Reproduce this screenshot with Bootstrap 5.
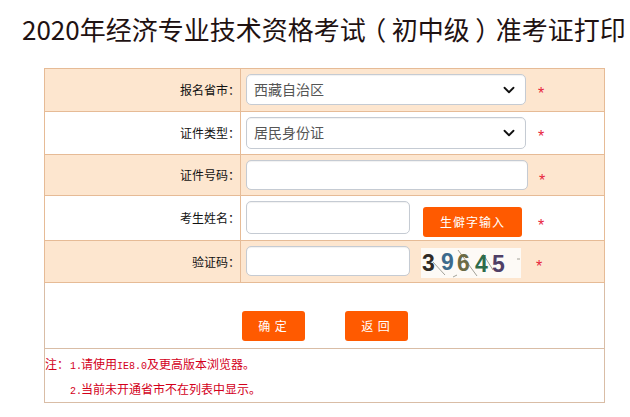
<!-- index.html -->
<!DOCTYPE html>
<html lang="zh-CN">
<head>
  <meta charset="UTF-8">
  <meta name="viewport" content="width=device-width, initial-scale=1">
  <link href="https://cdn.jsdelivr.net/npm/bootstrap@5.3.2/dist/css/bootstrap.min.css" rel="stylesheet">
  <script src="https://cdn.jsdelivr.net/npm/bootstrap@5.3.2/dist/js/bootstrap.bundle.min.js"></script>
  <style>
    body { font-family: "Noto Sans CJK SC", "Liberation Sans", sans-serif; background: #fff; overflow: hidden; }
    .page-title { font-family: "Noto Sans CJK SC", sans-serif; font-size: 26px; line-height: 38px; font-weight: 400; color: #1f1212; margin: 0; padding: 10px 0 0 22px; white-space: nowrap; }
    .paren { display: inline-block; width: 26px; text-align: center; font-feature-settings: "palt"; }
    .print-wrap { padding: 20px 0 0 44px; }
    .print-form { width: 561px; table-layout: fixed; border-collapse: collapse; margin: 0; }
    .print-form td { border: 1px solid #e6bb96; padding: 0; vertical-align: top; color: #111; }
    .print-form tr.tint td { background-color: #fde6cf; }
    .print-form .label-cell { width: 196px; font-size: 12px; text-align: right; vertical-align: middle; }
    .print-form .plain-edge td { border-color: #d9bda6; }
    .print-form .row-a td { height: 43px; }
    .print-form .row-c td { height: 41px; }
    .print-form .row-d td { height: 45px; }
    .print-form .row-e td { height: 42px; }
    .field-row { display: flex; align-items: flex-start; padding: 5px 0 0 5px; }
    .form-select.field, .form-control.field { font-size: 14px; color: #555; padding: 0 36px 0 7px; border-color: #c5cbd3; border-radius: 5px; box-shadow: inset 0 1px 1px rgba(0,0,0,.06); }
    .form-select.field { background-position: right 8px center; background-image: url("data:image/svg+xml,%3csvg xmlns='http://www.w3.org/2000/svg' viewBox='0 0 16 16'%3e%3cpath fill='none' stroke='%23111' stroke-linecap='round' stroke-linejoin='round' stroke-width='2.4' d='m2 5 6 6 6-6'/%3e%3c/svg%3e"); }
    .w-select { width: 280px; height: 31px; }
    .form-select.field.h-second { height: 32px; padding-bottom: 2px; }
    .w-id { width: 282px; height: 30px; }
    .w-short { width: 164px; }
    .h-name { height: 33px; }
    .h-code { height: 30px; }
    .req { color: #e8263c; font-family: "Liberation Sans", sans-serif; font-size: 16px; line-height: 1; }
    .req-a { margin: 12px 0 0 12px; }
    .req-b { margin: 13px 0 0 11px; }
    .req-c { margin: 17px 0 0 16px; }
    .req-d { margin: 13px 0 0 15px; }
    .orange-btn { background: #ff5a00; border: 0; border-radius: 3px; color: #fff; font-size: 12px; line-height: 30px; height: 30px; padding: 0; }
    .orange-btn:hover { background: #ff5a00; color: #fff; }
    .spell-btn { width: 99px; margin: 6px 0 0 13px; letter-spacing: 1px; }
    .captcha-pic { width: 100px; height: 30px; margin: 2px 0 0 11px; background: #fdfaf6; display: block; }
    .action-row { height: 65px; padding-top: 28px; gap: 40px; }
    .action-btn { width: 63px; letter-spacing: 1px; }
    .note-list { color: #d3001b; font-size: 12px; height: 53px; padding-top: 2px; line-height: 25px; }
    .note-line { height: 25px; }
    .note-num { display: inline-block; width: 12px; padding-left: 1px; font-family: "Liberation Mono", monospace; font-size: 10px; }
    .note-latin { font-family: "Liberation Mono", monospace; font-size: 10px; }
    .note-indent { padding-left: 24px; }
  </style>
  <title>2020年经济专业技术资格考试（初中级）准考证打印</title>
</head>
<body>
<h1 class="page-title">2020年经济专业技术资格考试<span class="paren">（</span>初中级<span class="paren">）</span>准考证打印</h1>

<div class="print-wrap">
  <table class="table print-form">
    <tbody>
    <tr class="tint row-a">
      <td class="label-cell">报名省市：</td>
      <td>
        <div class="field-row">
          <select class="form-select field w-select"><option>西藏自治区</option></select>
          <span class="req req-a">*</span>
        </div>
      </td>
    </tr>
    <tr class="row-a">
      <td class="label-cell">证件类型：</td>
      <td>
        <div class="field-row">
          <select class="form-select field w-select h-second"><option>居民身份证</option></select>
          <span class="req req-a">*</span>
        </div>
      </td>
    </tr>
    <tr class="tint row-c">
      <td class="label-cell">证件号码：</td>
      <td>
        <div class="field-row">
          <input type="text" class="form-control field w-id">
          <span class="req req-b">*</span>
        </div>
      </td>
    </tr>
    <tr class="row-d">
      <td class="label-cell">考生姓名：</td>
      <td>
        <div class="field-row">
          <input type="text" class="form-control field w-short h-name">
          <button type="button" class="btn orange-btn spell-btn">生僻字输入</button>
          <span class="req req-c">*</span>
        </div>
      </td>
    </tr>
    <tr class="tint row-e">
      <td class="label-cell">验证码：</td>
      <td>
        <div class="field-row">
          <input type="text" class="form-control field w-short h-code">
          <svg class="captcha-pic" viewBox="0 0 100 30" aria-label="验证码">
            <g stroke="#8a8a80" stroke-width=".8" fill="none">
              <path d="M12 14 L24 27"/>
              <path d="M37 2 L56 28"/>
              <path d="M62 6 L72 22"/>
              <path d="M32 29 L36 27"/>
              <path d="M96 11 L99 11"/>
            </g>
            <g font-family="Liberation Sans, sans-serif" font-weight="700" font-size="23">
              <text x="1" y="23" fill="#2f2a26">3</text>
              <text x="20" y="22" fill="#3c6a8c">9</text>
              <text x="36" y="23" fill="#6b6b45">6</text>
              <text x="54" y="24" fill="#2e6b4a">4</text>
              <text x="71" y="24" fill="#4f3f66">5</text>
            </g>
          </svg>
          <span class="req req-d">*</span>
        </div>
      </td>
    </tr>
    <tr class="plain-edge">
      <td colspan="2">
        <div class="d-flex justify-content-center action-row">
          <button type="button" class="btn orange-btn action-btn">确 定</button>
          <button type="button" class="btn orange-btn action-btn">返 回</button>
        </div>
      </td>
    </tr>
    <tr class="plain-edge">
      <td colspan="2">
        <div class="note-list">
          <div class="note-line">注：<span class="note-num">1.</span>请使用<span class="note-latin">IE8.0</span>及更高版本浏览器。</div>
          <div class="note-line note-indent"><span class="note-num">2.</span>当前未开通省市不在列表中显示。</div>
        </div>
      </td>
    </tr>
    </tbody>
  </table>
</div>
</body>
</html>
